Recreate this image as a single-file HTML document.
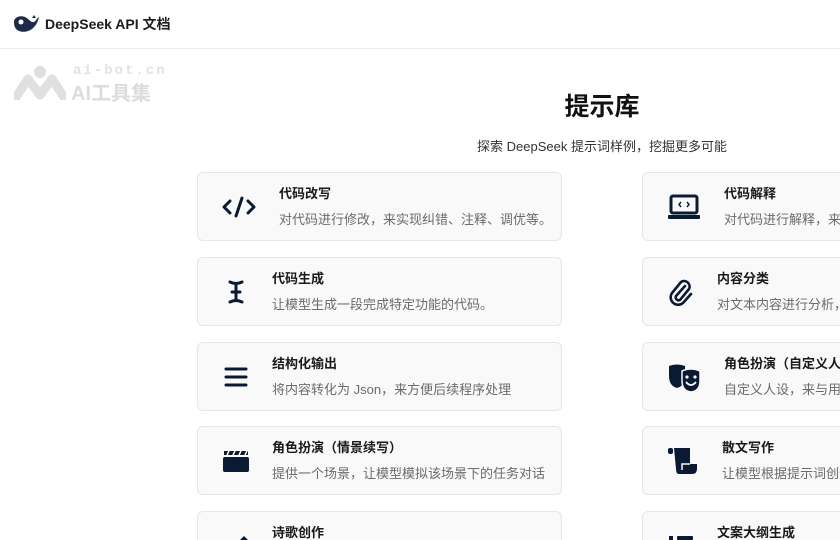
<!DOCTYPE html>
<html><head><meta charset="utf-8"><style>
*{margin:0;padding:0;box-sizing:border-box}
html,body{width:840px;height:540px;overflow:hidden}
body{background:#fff;font-family:"Liberation Sans","Noto Sans CJK SC",sans-serif;position:relative}
.hdr{position:absolute;left:0;top:0;width:840px;height:49px;border-bottom:1px solid #eee}
.brand{position:absolute;left:45px;top:14px;font-size:14px;font-weight:bold;color:#1c1c1c}
.wm1{position:absolute;left:73px;top:63px;font-size:14px;font-weight:bold;color:#e2e2e2;letter-spacing:2px;font-family:"Liberation Mono",monospace}
.wm2{position:absolute;left:71px;top:77px;font-size:20px;font-weight:bold;color:#dcdcdc}
h1{position:absolute;left:0;width:1204px;top:87px;text-align:center;font-size:25px;font-weight:bold;color:#111}
.sub{position:absolute;left:0;width:1204px;top:136px;text-align:center;font-size:13px;color:#333}
.wrap{position:absolute;left:0;top:0;width:840px;height:540px;overflow:hidden}
.card{position:absolute;width:365px;height:69px;background:#f9f9f9;border:1px solid #e6e6e6;border-radius:6px}
.t{position:absolute;top:10px;font-size:13px;font-weight:bold;color:#1a1a1a;white-space:nowrap}
.d{position:absolute;top:36px;font-size:13px;color:#6b6b6b;white-space:nowrap}
.ic{position:absolute}
</style></head><body>
<div class="hdr">
<svg class="ic" style="left:12px;top:14px" width="28" height="20" viewBox="0 0 28 20"><path d="M2 8 C2 3 8 1 13 3 C17 5 19 9 22 8 C24 7 25 4 27 3 C26 7 25 10 22 13 C19 17 12 19 7 17 C3 15 2 12 2 8Z" fill="#1e2a4a"/><circle cx="9" cy="8" r="2.5" fill="#fff"/><path d="M20 4 L22 1 L24 4Z" fill="#1e2a4a"/></svg>
<div class="brand">DeepSeek API 文档</div>
</div>
<svg class="ic" style="left:14px;top:65px" width="52" height="35" viewBox="0 0 52 35"><circle cx="26" cy="7" r="6" fill="#e0e0e0"/><path d="M2 32 L14 14 L26 30 L38 14 L50 32" stroke="#e0e0e0" stroke-width="9" fill="none" stroke-linecap="round" stroke-linejoin="round"/></svg>
<div class="wm1">ai-bot.cn</div>
<div class="wm2">AI工具集</div>
<h1>提示库</h1>
<div class="sub">探索 DeepSeek 提示词样例，挖掘更多可能</div>
<div class="wrap">
<div class="card" style="left:197px;top:172px">
<svg class="ic" style="left:23px;top:23px" width="36" height="22" viewBox="0 0 36 22"><path d="M9 5 L3 11 L9 17 M27 5 L33 11 L27 17 M21 2 L15 20" stroke="#0b1a33" stroke-width="3" fill="none" stroke-linecap="round" stroke-linejoin="round"/></svg>
<div class="t" style="left:81px">代码改写</div><div class="d" style="left:81px">对代码进行修改，来实现纠错、注释、调优等。</div></div>
<div class="card" style="left:197px;top:257px">
<svg class="ic" style="left:30px;top:21px" width="16" height="26" viewBox="0 0 16 26"><path d="M2 3 Q8 6 14 3 M2 23 Q8 20 14 23 M8 5 V21 M4 13 H12" stroke="#0b1a33" stroke-width="3" fill="none" stroke-linecap="round"/></svg>
<div class="t" style="left:74px">代码生成</div><div class="d" style="left:74px">让模型生成一段完成特定功能的代码。</div></div>
<div class="card" style="left:197px;top:342px">
<svg class="ic" style="left:26px;top:23px" width="24" height="22" viewBox="0 0 24 22"><path d="M2 3 H22 M2 11 H22 M2 19 H22" stroke="#0b1a33" stroke-width="3" stroke-linecap="round"/></svg>
<div class="t" style="left:74px">结构化输出</div><div class="d" style="left:74px">将内容转化为 Json，来方便后续程序处理</div></div>
<div class="card" style="left:197px;top:426px">
<svg class="ic" style="left:25px;top:22px" width="26" height="24" viewBox="0 0 26 24"><rect x="0" y="8" width="26" height="15" rx="2" fill="#0b1a33"/><path d="M1 2 H25 V6 H1Z" fill="#0b1a33"/><path d="M6 2 L4 6 M12 2 L10 6 M18 2 L16 6 M24 2 L22 6" stroke="#f9f9f9" stroke-width="1.5"/></svg>
<div class="t" style="left:74px">角色扮演（情景续写）</div><div class="d" style="left:74px">提供一个场景，让模型模拟该场景下的任务对话</div></div>
<div class="card" style="left:197px;top:511px">
<svg class="ic" style="left:32px;top:18px" width="20" height="20" viewBox="0 0 20 20"><path d="M3 17 L14 6 L18 10 L7 20Z" fill="#0b1a33"/></svg>
<div class="t" style="left:74px">诗歌创作</div></div>

<div class="card" style="left:642px;top:172px">
<svg class="ic" style="left:25px;top:21px" width="32" height="26" viewBox="0 0 32 26"><rect x="3" y="2" width="26" height="17" rx="2" stroke="#0b1a33" stroke-width="3" fill="none"/><rect x="0" y="21" width="32" height="4" rx="1" fill="#0b1a33"/><path d="M13 8 L11 10.5 L13 13 M19 8 L21 10.5 L19 13" stroke="#0b1a33" stroke-width="1.5" fill="none"/></svg>
<div class="t" style="left:81px">代码解释</div><div class="d" style="left:81px">对代码进行解释，来帮助理解代码。</div></div>
<div class="card" style="left:642px;top:257px">
<svg class="ic" style="left:25px;top:20px" width="26" height="28" viewBox="0 0 26 28"><path d="M17 8 L8 18 A3 3 0 0 0 12 22 L21 11 A5.5 5.5 0 0 0 13 4 L4 15 A7.5 7.5 0 0 0 15 25 L23 16" stroke="#0b1a33" stroke-width="2.6" fill="none" stroke-linecap="round"/></svg>
<div class="t" style="left:74px">内容分类</div><div class="d" style="left:74px">对文本内容进行分析，并对其进行自动归类</div></div>
<div class="card" style="left:642px;top:342px">
<svg class="ic" style="left:25px;top:20px" width="34" height="30" viewBox="0 0 34 30"><path d="M1 3 Q9 0 17 3 V13 Q17 23 9 25 Q1 23 1 13Z" fill="#0b1a33"/><path d="M14 8 Q23 4 32 8 V18 Q32 28 23 29 Q14 28 14 18Z" fill="#0b1a33" stroke="#f9f9f9" stroke-width="1.5"/><circle cx="19" cy="14" r="1.6" fill="#f9f9f9"/><circle cx="27" cy="14" r="1.6" fill="#f9f9f9"/><path d="M18 19 Q23 25 28 19" stroke="#f9f9f9" stroke-width="1.8" fill="none"/></svg>
<div class="t" style="left:81px">角色扮演（自定义人设）</div><div class="d" style="left:81px">自定义人设，来与用户进行角色扮演。</div></div>
<div class="card" style="left:642px;top:426px">
<svg class="ic" style="left:25px;top:20px" width="30" height="28" viewBox="0 0 30 28"><rect x="0" y="1" width="5" height="6" rx="2" fill="#0b1a33"/><path d="M6 1 H22 V17 H29 V22 Q29 27 24 27 H11 Q8 27 8 22 Z" fill="#0b1a33"/><path d="M22 17 H14 V23" stroke="#f9f9f9" stroke-width="1.5" fill="none"/></svg>
<div class="t" style="left:79px">散文写作</div><div class="d" style="left:79px">让模型根据提示词创作散文。</div></div>
<div class="card" style="left:642px;top:511px">
<svg class="ic" style="left:26px;top:22px" width="26" height="10" viewBox="0 0 26 10"><rect x="0" y="2" width="4" height="4" fill="#0b1a33"/><rect x="8" y="2" width="16" height="4" rx="1" fill="#0b1a33"/></svg>
<div class="t" style="left:74px">文案大纲生成</div></div>
</div>
</body></html>
